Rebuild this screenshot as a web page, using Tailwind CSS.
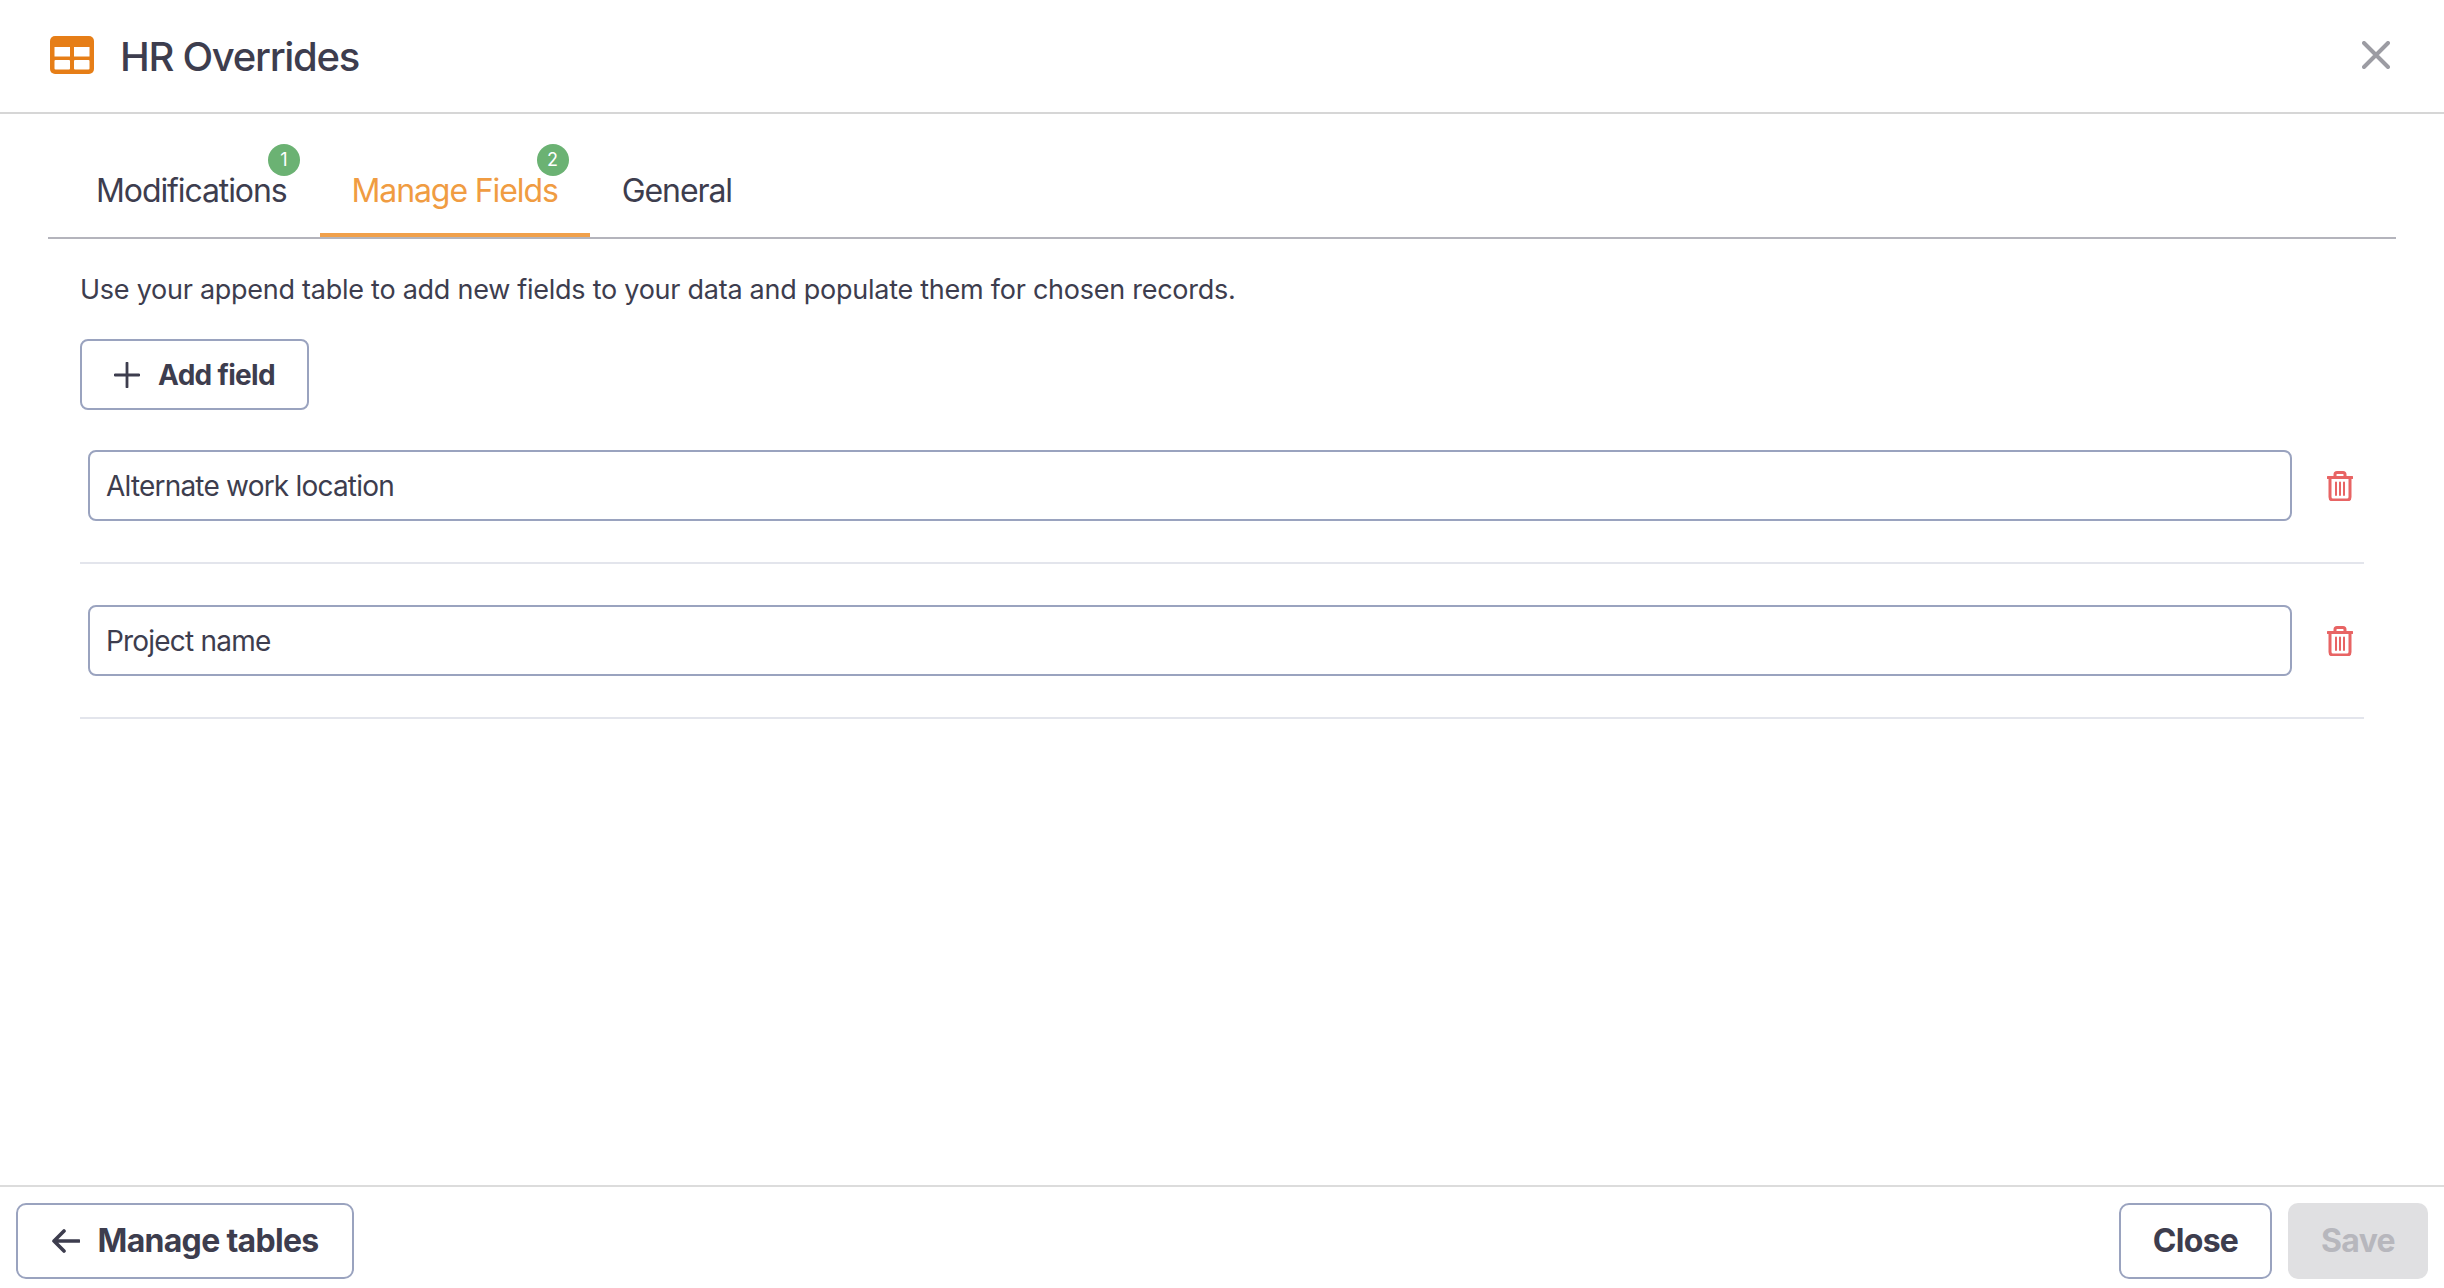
<!DOCTYPE html>
<html lang="en">
<head>
    <meta charset="UTF-8">
    <title>HR Overrides</title>
    <script src="https://cdn.jsdelivr.net/npm/@tailwindcss/browser@4"></script>
</head>
<body class="bg-white text-[#3d3d4e] font-['Inter',sans-serif]">
    <div class="flex flex-col h-[1288px] overflow-hidden">
        <!-- Header -->
        <header class="h-[114px] shrink-0 border-b-2 border-[#d6d6d6] pl-[50px] pr-[54px] flex items-center justify-between">
            <div class="flex items-center gap-[26px]">
                <svg class="w-[44px] h-[38px] mt-[-3px]" viewBox="0 0 44 38">
                    <rect width="44" height="38" rx="5" fill="#e67e17"/>
                    <rect x="4.5" y="11" width="15.5" height="9.5" fill="#fff"/>
                    <rect x="24" y="11" width="15.5" height="9.5" fill="#fff"/>
                    <rect x="4.5" y="24" width="15.5" height="9.5" rx="1" fill="#fff"/>
                    <rect x="24" y="24" width="15.5" height="9.5" rx="1" fill="#fff"/>
                </svg>
                <h1 class="text-[40px] leading-none font-medium tracking-[-1.3px] mt-[2px]">HR Overrides</h1>
            </div>
            <svg class="w-[28px] h-[28px] mt-[-3px]" viewBox="0 0 28 28" fill="none" stroke="#9c9ca3" stroke-width="4" stroke-linecap="round">
                <path d="M2 2 26 26M26 2 2 26"/>
            </svg>
        </header>

        <main class="flex-1 px-[48px]">
            <!-- Tabs -->
            <nav class="h-[125px] border-b-2 border-[#b4b4bc] pl-[16px] flex items-end text-[32px] leading-none tracking-[-1.1px]">
                <div class="relative h-full flex items-center pl-[32px] pr-[33px] pt-[58px] pb-[24px] border-b-[4px] border-transparent">
                    Modifications
                    <span class="absolute left-[204px] top-[30px] w-[32px] h-[32px] rounded-full bg-[#6bb273] text-white text-[18px] tracking-normal flex items-center justify-center">1</span>
                </div>
                <div class="relative h-full flex items-center px-[32px] pt-[58px] pb-[24px] text-[#f09c42] border-b-[4px] border-[#f0a04b]">
                    Manage Fields
                    <span class="absolute left-[217px] top-[30px] w-[32px] h-[32px] rounded-full bg-[#6bb273] text-white text-[18px] tracking-normal flex items-center justify-center">2</span>
                </div>
                <div class="h-full flex items-center px-[32px] pt-[58px] pb-[24px] border-b-[4px] border-transparent">General</div>
            </nav>

            <!-- Manage fields panel -->
            <section class="px-[32px]">
                <p class="mt-[34px] text-[27px] leading-[34px] tracking-[-0.26px]">Use your append table to add new fields to your data and populate them for chosen records.</p>
                <button class="mt-[32px] h-[71px] w-[229px] border-2 border-[#9aa3bf] rounded-[8px] flex items-center justify-center gap-[18px] text-[28px] font-bold tracking-[-0.7px]">
                    <svg class="w-[26px] h-[26px]" viewBox="0 0 26 26" fill="none" stroke="#3d3d4e" stroke-width="2.8" stroke-linecap="round"><path d="M13 1v24M1 13h24"/></svg>
                    Add field
                </button>

                <div class="mt-[40px] pb-[41px] border-b-2 border-[#e3e5ec] flex items-center pl-[8px]">
                    <div class="w-[2204px] h-[71px] border-2 border-[#9aa3bf] rounded-[8px] px-[16px] flex items-center text-[28px] tracking-[-0.8px]">Alternate work location</div>
                    <svg class="w-[26px] h-[30px] ml-[35px]" viewBox="0 0 26 30" fill="none" stroke="#e86464" stroke-width="3" stroke-linecap="round" stroke-linejoin="round">
                        <path d="M1 6.5h24M8 6V3.5Q8 1.5 10 1.5h6Q18 1.5 18 3.5V6M3 7v19q0 3 3 3h14q3 0 3-3V7"/>
                        <path d="M9 11.5v12.5M13 11.5v12.5M17 11.5v12.5" stroke-width="2"/>
                    </svg>
                </div>

                <div class="mt-[41px] pb-[41px] border-b-2 border-[#e3e5ec] flex items-center pl-[8px]">
                    <div class="w-[2204px] h-[71px] border-2 border-[#9aa3bf] rounded-[8px] px-[16px] flex items-center text-[28px] tracking-[-0.8px]">Project name</div>
                    <svg class="w-[26px] h-[30px] ml-[35px]" viewBox="0 0 26 30" fill="none" stroke="#e86464" stroke-width="3" stroke-linecap="round" stroke-linejoin="round">
                        <path d="M1 6.5h24M8 6V3.5Q8 1.5 10 1.5h6Q18 1.5 18 3.5V6M3 7v19q0 3 3 3h14q3 0 3-3V7"/>
                        <path d="M9 11.5v12.5M13 11.5v12.5M17 11.5v12.5" stroke-width="2"/>
                    </svg>
                </div>
            </section>
        </main>

        <!-- Footer -->
        <footer class="h-[103px] shrink-0 border-t-2 border-[#dcdcdc] px-[16px] pt-[16px] flex justify-between items-start text-[32px] font-bold tracking-[-0.7px]">
            <button class="h-[76px] w-[338px] border-2 border-[#9aa3bf] rounded-[10px] flex items-center justify-center gap-[18px]">
                <svg class="w-[28px] h-[24px]" viewBox="0 0 28 24" fill="none" stroke="#3d3d4e" stroke-width="3.6" stroke-linecap="round" stroke-linejoin="round"><path d="M2 12h25M12 2 2 12l10 10"/></svg>
                Manage tables
            </button>
            <div class="flex gap-[16px]">
                <button class="h-[76px] w-[153px] border-2 border-[#9aa3bf] rounded-[10px]">Close</button>
                <button class="h-[76px] w-[140px] bg-[#e0e0e2] text-[#b7b7bd] rounded-[10px]">Save</button>
            </div>
        </footer>
    </div>
</body>
</html>
